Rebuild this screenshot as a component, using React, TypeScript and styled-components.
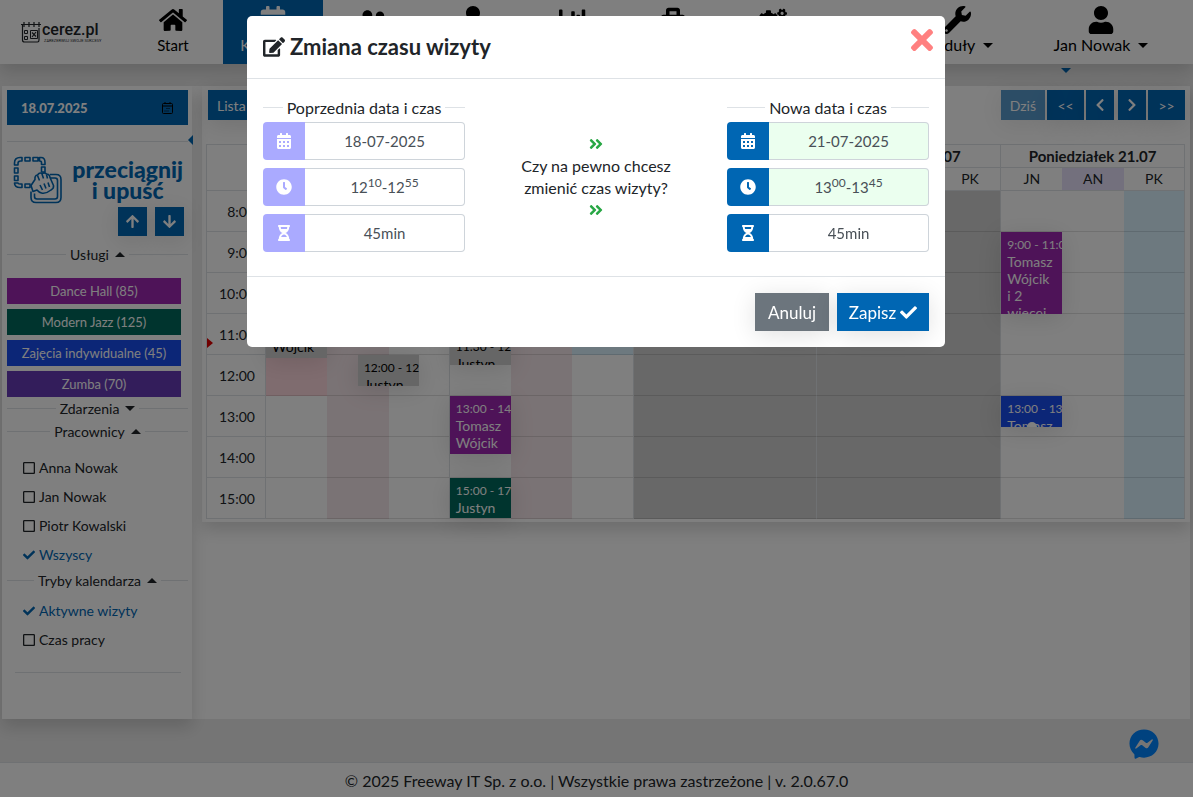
import React, { useState } from "react";
import styled, { createGlobalStyle, css } from "styled-components";
import {
  FaHome, FaCalendarAlt, FaUserFriends, FaUser, FaChartBar, FaToolbox, FaCogs, FaWrench,
  FaEdit, FaCheck, FaTimes, FaClock, FaHourglassHalf, FaAngleDoubleRight, FaArrowUp, FaArrowDown,
  FaChevronLeft, FaChevronRight, FaFacebookMessenger, FaRegSquare,
} from "react-icons/fa";

const blue = "#0066b3";
const line = "#dee2e6";
const shadow = "0 8px 16px rgba(0, 0, 0, 0.15)";
const softShadow = "0 4px 24px rgba(0, 0, 0, 0.12)";

const GlobalStyle = createGlobalStyle`
  *, *::before, *::after { box-sizing: border-box; }
  body {
    margin: 0;
    background: #ebebeb;
    color: #212529;
    font-family: Lato, "Liberation Sans", sans-serif;
    font-size: 14px;
    line-height: 22px;
  }
  button, input { font-family: inherit; }
  a { color: inherit; text-decoration: none; }
`;

const Page = styled.div`
  display: flex;
  flex-direction: column;
  min-height: 100vh;
`;

/* ---------- top bar ---------- */

const TopBar = styled.header`
  position: relative;
  z-index: 1;
  display: flex;
  height: 64px;
  background: #fff;
  box-shadow: ${shadow};
`;

const Brand = styled.a`
  display: flex;
  align-items: center;
  gap: 1px;
  width: 123px;
  padding-left: 21px;
`;

const BrandText = styled.span`
  display: flex;
  flex-direction: column;
  font-family: Roboto, sans-serif;
`;

const BrandName = styled.span`
  font-size: 16px;
  font-weight: 500;
  line-height: 18px;
`;

const BrandClaim = styled.span`
  padding-left: 2px;
  font-size: 4px;
  line-height: 4px;
  white-space: nowrap;
`;

const Nav = styled.nav`
  display: flex;
  flex: 1;
`;

const NavItem = styled.a<{ $active?: boolean }>`
  display: flex;
  flex-direction: column;
  align-items: center;
  width: 100px;
  padding-top: 6px;
  color: ${(p) => (p.$active ? "#fff" : "#000")};
  background: ${(p) => (p.$active ? blue : "transparent")};
  font-size: 15px;
  white-space: nowrap;

  & > svg { height: 28px; width: auto; }
`;

const NavLabel = styled.span`
  display: flex;
  align-items: center;
  gap: 8px;
`;

const NavGroup = styled.div`
  display: flex;
  gap: 44px;
  margin-left: auto;
  padding-right: 42px;

  ${NavLabel} { font-size: 16px; }
`;

const Caret = styled.span<{ $up?: boolean; $color?: string }>`
  display: inline-block;
  border: 5px solid transparent;
  ${(p) =>
    p.$up
      ? css`border-top: 0; border-bottom-color: ${p.$color ?? "currentColor"};`
      : css`border-bottom: 0; border-top-color: ${p.$color ?? "currentColor"};`}
`;

const Strip = styled.div`
  display: flex;
  justify-content: flex-end;
  align-items: flex-start;
  height: 22px;
  padding: 4px 122px 0 0;
`;

/* ---------- content ---------- */

const Content = styled.main`
  display: flex;
  flex: 1;
  align-items: stretch;
  gap: 10px;
  margin: 0 3px 43px 2px;
  background: #fff;
`;

const Sidebar = styled.aside`
  position: relative;
  flex: 0 0 190px;
  min-width: 0;
  padding: 4px 4px 44px 5px;
  background: #fff;
  box-shadow: ${shadow};
`;

const DateField = styled.label`
  display: flex;
  align-items: center;
  height: 35px;
  padding: 0 15px 0 14px;
  background: ${blue};
  color: #000;

  input {
    flex: 1;
    width: 0;
    min-width: 0;
    padding: 0;
    border: 0;
    background: transparent;
    color: #fff;
    font-size: 13px;
    font-weight: 900;
  }
`;

const CollapseMark = styled.span`
  position: absolute;
  right: -1px;
  top: 49px;
  border: 5px solid transparent;
  border-left: 0;
  border-right-color: ${blue};
`;

const Rule = styled.hr<{ $inset?: boolean }>`
  height: 1px;
  margin: ${(p) => (p.$inset ? "18px 7px 0 8px" : "16px 0 0")};
  border: 0;
  background: ${line};
`;

const DragHint = styled.div`
  display: flex;
  align-items: center;
  justify-content: space-between;
  height: 48px;
  margin: 14px 5px 0 6px;
  color: ${blue};
`;

const DragText = styled.p`
  margin: 0;
  font-size: 23px;
  font-weight: 900;
  line-height: 21px;
  text-align: center;
`;

const Arrows = styled.div`
  display: flex;
  justify-content: flex-end;
  gap: 8px;
  margin: 3px 4px 7px 0;
`;

const SquareButton = styled.button`
  display: flex;
  align-items: center;
  justify-content: center;
  width: 29px;
  height: 29px;
  padding: 0;
  border: 0;
  background: ${blue};
  color: #fff;
  font-size: 15px;
  box-shadow: ${softShadow};
`;

const Legend = styled.div<{ $tall?: boolean }>`
  display: flex;
  align-items: center;
  gap: 4px;
  height: ${(p) => (p.$tall ? 25 : 23)}px;
  font-size: ${(p) => (p.$tall ? 16 : 14)}px;
  color: #212529;
  white-space: nowrap;

  &::before, &::after {
    content: "";
    flex: 1;
    height: 1px;
    background: ${line};
  }
`;

const LegendToggle = styled.button`
  display: flex;
  align-items: center;
  gap: 6px;
  padding: 0;
  border: 0;
  background: none;
  color: inherit;
  font-size: 14px;
`;

const Services = styled.div`
  display: flex;
  flex-direction: column;
  gap: 5px;
  margin: 12px 7px 0 0;
`;

const Service = styled.button<{ $color: string }>`
  height: 26px;
  padding: 0;
  border: 0;
  background: ${(p) => p.$color};
  color: #fff;
  font-size: 13px;
`;

const Options = styled.div<{ $first?: boolean }>`
  padding: ${(p) => (p.$first ? "10px 0 0 16px" : "4px 0 0 16px")};
`;

const Option = styled.label<{ $checked: boolean }>`
  position: relative;
  display: flex;
  align-items: center;
  gap: 4px;
  height: 29px;
  color: ${(p) => (p.$checked ? blue : "#212529")};

  input {
    position: absolute;
    left: 0;
    width: 12px;
    height: 12px;
    margin: 0;
    opacity: 0;
  }
  svg { width: 12px; height: 14px; }
`;

/* ---------- calendar ---------- */

const Panel = styled.section`
  flex: 1;
  min-width: 0;
  align-self: flex-start;
  padding: 4px 5px 3px 4px;
  background: #fff;
  box-shadow: ${shadow};
`;

const Toolbar = styled.div`
  display: flex;
  justify-content: space-between;
  height: 30px;
  margin: 0 0 24px 2px;
`;

const ToolGroup = styled.div`
  display: flex;
  gap: 2px;
`;

const ToolButton = styled.button<{ $muted?: boolean; $icon?: boolean }>`
  display: flex;
  align-items: center;
  justify-content: center;
  min-width: ${(p) => (p.$icon ? 28 : 37)}px;
  padding: 0 ${(p) => (p.$icon ? 4 : 9)}px;
  border: 0;
  background: ${blue};
  color: #fff;
  font-size: 14px;
  opacity: ${(p) => (p.$muted ? 0.65 : 1)};
  box-shadow: ${softShadow};

  & + &:nth-child(4) { margin-left: 2px; }
`;

const Grid = styled.table`
  width: 100%;
  table-layout: fixed;
  border-collapse: separate;
  border-spacing: 0;
  border: 1px solid ${line};
  border-width: 1px 0 0 1px;
`;

const TimeCol = styled.col`
  width: 59px;
`;

const HeadCell = styled.th<{ $end?: boolean; $bg?: string; $day?: boolean }>`
  height: 23px;
  padding: 0;
  border-bottom: 1px solid ${line};
  border-right: ${(p) => (p.$end ? `1px solid ${line}` : 0)};
  background: ${(p) => p.$bg ?? "transparent"};
  font-weight: ${(p) => (p.$day ? 700 : 400)};
  font-size: ${(p) => (p.$day ? 15 : 14)}px;
  line-height: 20px;
`;

const HourCell = styled.th`
  position: relative;
  height: 41px;
  padding: 2px 10px 0 0;
  border-bottom: 1px solid ${line};
  border-right: 1px solid ${line};
  font-size: 14px;
  font-weight: 400;
  text-align: right;
`;

const NowMark = styled.span`
  position: absolute;
  left: 0;
  bottom: 6px;
  border: 5px solid transparent;
  border-right: 0;
  border-left: 6px solid #e00000;
`;

const Slot = styled.td<{ $end?: boolean; $bg: string }>`
  position: relative;
  height: 41px;
  padding: 0;
  border-bottom: 1px solid rgba(0, 0, 0, 0.12);
  border-right: ${(p) => (p.$end ? `1px solid ${line}` : 0)};
  background: ${(p) => p.$bg};
`;

const Visit = styled.div<{ $color: string; $past?: boolean }>`
  position: absolute;
  z-index: 1;
  width: 100%;
  padding: 4px 0 0 6px;
  overflow: hidden;
  background: ${(p) => p.$color};
  color: ${(p) => (p.$past ? "#000" : "#fff")};
  font-size: 14px;
  line-height: 17px;
  box-shadow: ${softShadow};
`;

const VisitTime = styled.div`
  font-size: 12px;
  white-space: nowrap;
`;

const ResizeDot = styled.span`
  position: absolute;
  left: 50%;
  bottom: -5px;
  width: 10px;
  height: 10px;
  margin-left: -5px;
  border-radius: 50%;
  background: #fff;
`;

/* ---------- footer ---------- */

const Footer = styled.footer`
  height: 35px;
  padding-top: 7px;
  border-top: 1px solid ${line};
  background: #fff;
  text-align: center;
  font-size: 16px;
`;

const ChatLink = styled.a`
  position: fixed;
  right: 34px;
  bottom: 38px;
  display: flex;
  color: #0084ff;
  font-size: 30px;
`;

/* ---------- dialog ---------- */

const Backdrop = styled.div`
  position: fixed;
  inset: 0;
  z-index: 10;
  padding: 16px 17px 16px 16px;
  background: rgba(0, 0, 0, 0.5);
`;

const Dialog = styled.div`
  max-width: 698px;
  margin: 0 auto;
  border-radius: 5px;
  background: #fff;
`;

const DialogHeader = styled.div`
  display: flex;
  justify-content: space-between;
  padding: 16px;
  border-bottom: 1px solid ${line};
`;

const DialogTitle = styled.h2`
  display: flex;
  align-items: center;
  gap: 5px;
  margin: 0;
  font-size: 22px;
  font-weight: 700;
  line-height: 30px;
`;

const CloseButton = styled.button`
  display: flex;
  height: 22px;
  margin: -8px -9px 0 0;
  padding: 0;
  border: 0;
  background: none;
  color: #ff8080;
  font-size: 32px;
`;

const DialogBody = styled.div`
  display: flex;
  justify-content: space-between;
  padding: 16px 16px 24px;
`;

const Term = styled.div`
  display: flex;
  flex-direction: column;
  gap: 8px;
  width: 202px;

  ${Legend} { margin-bottom: -6px; }
`;

const Question = styled.p`
  width: 170px;
  margin: 38px 0 0;
  text-align: center;
  font-size: 16px;

  svg { display: block; margin: 0 auto; height: 22px; color: #28a745; font-size: 14px; }
`;

const InputGroup = styled.div`
  display: flex;
  height: 38px;
`;

const InputIcon = styled.span<{ $old?: boolean }>`
  display: flex;
  align-items: center;
  justify-content: center;
  width: 42px;
  border-radius: 4px 0 0 4px;
  background: ${(p) => (p.$old ? "#aaaaff" : blue)};
  color: #fff;
  font-size: 16px;
`;

const Value = styled.output<{ $changed?: boolean }>`
  flex: 1;
  border: 1px solid #ced4da;
  border-left: 0;
  border-radius: 0 4px 4px 0;
  background: ${(p) => (p.$changed ? "#ebffef" : "#fff")};
  color: #495057;
  font-size: 15px;
  line-height: 36px;
  text-align: center;

  sup { font-size: 12px; line-height: 0; }
`;

const DialogFooter = styled.div`
  display: flex;
  justify-content: flex-end;
  gap: 8px;
  padding: 16px;
  border-top: 1px solid ${line};
`;

const ActionButton = styled.button<{ $primary?: boolean }>`
  display: flex;
  align-items: center;
  justify-content: center;
  gap: 4px;
  height: 38px;
  min-width: ${(p) => (p.$primary ? 92 : 74)}px;
  padding: 0 11px;
  border: 0;
  background: ${(p) => (p.$primary ? blue : "#6c757d")};
  color: #fff;
  font-size: 17px;
  box-shadow: ${softShadow};
`;

/* ---------- drawings ---------- */

const LogoMark = () => (
  <svg width="20" height="22" viewBox="0 0 20 22" fill="none" stroke="#212529">
    <path d="M0 3.5h20M1.5 3.500v15.500q0 2 2 2h13q1.500 0 1.500-2v-12" strokeWidth="1.200" />
    <path d="M3 1v5M8 1v5M13 1v5M18 1v5" strokeWidth="1.200" />
    <path d="M3.500 9.500h3v3h-3zM3.500 15.500h3v3h-3zM9.500 9.500h7v8h-7z" />
    <path d="M11 11.500l4 4M15 11l-4 5" strokeWidth="1.200" />
  </svg>
);

const DragMark = () => (
  <svg width="50" height="48" viewBox="0 0 50 48" fill="none" stroke={blue} strokeWidth="1.600" strokeLinejoin="round">
    <path d="M9 1.500h-2q-5.500 0-5.500 5.500v2h3.500v-1.500q0-2.500 2.500-2.500h1.500zM12 1.500h5v3.500h-5zM20 1.500h5v3.500h-5zM28 1.500q4 0 4 5v2h-3.500v-2q0-1.500-2-1.500v-3.500zM28.500 11h3.500v5h-3.500zM1.500 12h3.500v5h-3.500zM1.500 20h3.500v4.500h-3.500zM1.500 27h3.500q0 1 2 1h2v3.500h-2q-5.500 0-5.500-4.500zM12 28h5v3.500h-5z" />
    <path d="M37 18.500h6q5 0 5 5v18q0 5-5 5h-20q-5 0-5-5v-6M38 22h4q2.500 0 2.500 2.500v16q0 2.500-2.500 2.500h-18q-2.500 0-2.500-2.500v-3" />
    <path d="M18 29.500l4-6q-.5-4 2.500-4.500q2-3 4.500-1.500q2.500-1.500 4.500.5q3 0 3.500 3.500l3.500 8q.5 3-2.500 4.500q-5 4-9.500 3q-2.500-.5-4.500-3l-4 1.500z" fill="#fff" />
    <path d="M24.500 19.500l2 5M29 18l1.500 4.500M33.500 18.500l1 4M27 29l2.500 5M31 27.500l2 5M35 26.500l1.500 4.500" />
  </svg>
);

const SmallCalendar = () => (
  <svg width="11" height="12" viewBox="0 0 11 12" fill="none" stroke="#000">
    <rect x=".5" y="1.500" width="10" height="10" rx="1" />
    <path d="M.5 4h10M3 0v2M8 0v2" />
    <path d="M4.500 6.500h4M2.500 9h4.500" strokeDasharray="1 1" />
  </svg>
);

/* ---------- data ---------- */

const nav = [
  { label: "Start", icon: FaHome },
  { label: "Kalendarz", icon: FaCalendarAlt, active: true },
  { label: "Klienci", icon: FaUserFriends },
  { label: "Pracownicy", icon: FaUser },
  { label: "Raporty", icon: FaChartBar },
  { label: "Usługi", icon: FaToolbox },
  { label: "Ustawienia", icon: FaCogs },
];

const services = [
  { name: "Dance Hall (85)", color: "#9c27b0" },
  { name: "Modern Jazz (125)", color: "#00695c" },
  { name: "Zajęcia indywidualne (45)", color: "#184cef" },
  { name: "Zumba (70)", color: "#673ab7" },
];

const days = ["Czwartek 17.07", "Piątek 18.07", "Sobota 19.07", "Niedziela 20.07", "Poniedziałek 21.07"];
const staff = ["JN", "AN", "PK"];
const hours = [8, 9, 10, 11, 12, 13, 14, 15];

const slotColor = (day: number, person: number, hour: number) => {
  if (day === 2 || day === 3) return "#d0d0d0";
  if (day === 4) return person === 2 ? "#daf3ff" : "#fff";
  if (person === 1) return "#f5e6ea";
  if (day === 0 && person === 0 && hour < 13) return "#ffd9df";
  if (day === 1 && person === 2 && hour < 12) return "#daf3ff";
  return "#fff";
};

type VisitData = {
  day: number; person: number; hour: number; top: number; height: number;
  time: string; lines: string[]; color: string; past?: boolean; shifted?: boolean; dot?: boolean;
};

const visits: VisitData[] = [
  { day: 0, person: 0, hour: 10, top: 27, height: 58, time: "10:40 - 12:05", lines: ["Tomasz", "Wójcik"], color: "#ccc", past: true },
  { day: 0, person: 1, hour: 12, top: 0, height: 31, time: "12:00 - 12:45", lines: ["Justyn"], color: "#ccc", past: true, shifted: true },
  { day: 1, person: 0, hour: 11, top: 20, height: 31, time: "11:30 - 12:15", lines: ["Justyn"], color: "#ccc", past: true },
  { day: 1, person: 0, hour: 13, top: 0, height: 58, time: "13:00 - 14:25", lines: ["Tomasz", "Wójcik"], color: "#9c27b0" },
  { day: 1, person: 0, hour: 15, top: 0, height: 40, time: "15:00 - 17:05", lines: ["Justyn"], color: "#00695c" },
  { day: 4, person: 0, hour: 9, top: 0, height: 82, time: "9:00 - 11:00", lines: ["Tomasz", "Wójcik", "i 2", "więcej"], color: "#9c27b0" },
  { day: 4, person: 0, hour: 13, top: 0, height: 31, time: "13:00 - 13:45", lines: ["Tomasz"], color: "#184cef", dot: true },
];

/* ---------- parts ---------- */

const CheckOption = ({ label, initial = false }: { label: string; initial?: boolean }) => {
  const [checked, setChecked] = useState(initial);
  return (
    <Option $checked={checked}>
      <input type="checkbox" checked={checked} onChange={(e) => setChecked(e.target.checked)} />
      {checked ? <FaCheck /> : <FaRegSquare />}
      {label}
    </Option>
  );
};

const SectionLegend = ({ label, open }: { label: string; open?: boolean }) => (
  <Legend>
    <LegendToggle aria-expanded={!!open}>{label}<Caret $up={open} /></LegendToggle>
  </Legend>
);

const TermBox = ({ title, date, from, to, old }: {
  title: string; date: string; from: [string, string]; to: [string, string]; old?: boolean;
}) => (
  <Term>
    <Legend $tall>{title}</Legend>
    <InputGroup>
      <InputIcon $old={old}><FaCalendarAlt /></InputIcon>
      <Value $changed={!old}>{date}</Value>
    </InputGroup>
    <InputGroup>
      <InputIcon $old={old}><FaClock /></InputIcon>
      <Value $changed={!old}>{from[0]}<sup>{from[1]}</sup>-{to[0]}<sup>{to[1]}</sup></Value>
    </InputGroup>
    <InputGroup>
      <InputIcon $old={old}><FaHourglassHalf /></InputIcon>
      <Value>45min</Value>
    </InputGroup>
  </Term>
);

const VisitBox = ({ visit }: { visit: VisitData }) => (
  <Visit
    $color={visit.color}
    $past={visit.past}
    style={{ top: visit.top, height: visit.height, left: visit.shifted ? "50%" : 0 }}
  >
    <VisitTime>{visit.time}</VisitTime>
    {visit.lines.map((l) => <div key={l}>{l}</div>)}
    {visit.dot && <ResizeDot />}
  </Visit>
);

export default function App() {
  return (
    <>
      <GlobalStyle />
      <Page>
        <TopBar>
          <Brand href="#">
            <LogoMark />
            <BrandText>
              <BrandName>cerez.pl</BrandName>
              <BrandClaim>ZAREZERWUJ SWOJE SUKCESY</BrandClaim>
            </BrandText>
          </Brand>
          <Nav>
            {nav.map(({ label, icon: Icon, active }) => (
              <NavItem key={label} href="#" $active={active}><Icon /><NavLabel>{label}</NavLabel></NavItem>
            ))}
            <NavGroup>
              <NavItem href="#"><FaWrench /><NavLabel>Moduły<Caret /></NavLabel></NavItem>
              <NavItem href="#"><FaUser /><NavLabel>Jan Nowak<Caret /></NavLabel></NavItem>
            </NavGroup>
          </Nav>
        </TopBar>
        <Strip><Caret $color={blue} /></Strip>

        <Content>
          <Sidebar>
            <DateField>
              <input type="text" aria-label="Data" defaultValue="18.07.2025" />
              <SmallCalendar />
            </DateField>
            <CollapseMark />
            <Rule />
            <DragHint>
              <DragMark />
              <DragText>przeciągnij<br />i upuść</DragText>
            </DragHint>
            <Arrows>
              <SquareButton aria-label="W górę"><FaArrowUp /></SquareButton>
              <SquareButton aria-label="W dół"><FaArrowDown /></SquareButton>
            </Arrows>
            <SectionLegend label="Usługi" open />
            <Services>
              {services.map((s) => <Service key={s.name} $color={s.color}>{s.name}</Service>)}
            </Services>
            <SectionLegend label="Zdarzenia" />
            <SectionLegend label="Pracownicy" open />
            <Options $first>
              <CheckOption label="Anna Nowak" />
              <CheckOption label="Jan Nowak" />
              <CheckOption label="Piotr Kowalski" />
              <CheckOption label="Wszyscy" initial />
            </Options>
            <SectionLegend label="Tryby kalendarza" open />
            <Options>
              <CheckOption label="Aktywne wizyty" initial />
              <CheckOption label="Czas pracy" />
            </Options>
            <Rule $inset />
          </Sidebar>

          <Panel>
            <Toolbar>
              <ToolButton>Lista wizyt</ToolButton>
              <ToolGroup>
                <ToolButton $muted>Dziś</ToolButton>
                <ToolButton>&lt;&lt;</ToolButton>
                <ToolButton $icon aria-label="Poprzedni dzień"><FaChevronLeft /></ToolButton>
                <ToolButton $icon aria-label="Następny dzień"><FaChevronRight /></ToolButton>
                <ToolButton>&gt;&gt;</ToolButton>
              </ToolGroup>
            </Toolbar>
            <Grid>
              <colgroup>
                <TimeCol />
                {days.map((d) => staff.map((s) => <col key={d + s} />))}
              </colgroup>
              <thead>
                <tr>
                  <HeadCell rowSpan={2} $end />
                  {days.map((d) => <HeadCell key={d} colSpan={3} $end $day>{d}</HeadCell>)}
                </tr>
                <tr>
                  {days.map((d, day) => staff.map((s, i) => (
                    <HeadCell key={d + s} $end={i === 2} $bg={day === 4 && i === 1 ? "#e6e0fa" : undefined}>{s}</HeadCell>
                  )))}
                </tr>
              </thead>
              <tbody>
                {hours.map((hour) => (
                  <tr key={hour}>
                    <HourCell scope="row">
                      {hour}:00
                      {hour === 11 && <NowMark />}
                    </HourCell>
                    {days.map((d, day) => staff.map((s, person) => (
                      <Slot key={d + s} $end={person === 2} $bg={slotColor(day, person, hour)}>
                        {visits
                          .filter((v) => v.day === day && v.person === person && v.hour === hour)
                          .map((v) => <VisitBox key={v.time} visit={v} />)}
                      </Slot>
                    )))}
                  </tr>
                ))}
              </tbody>
            </Grid>
          </Panel>
        </Content>

        <Footer>© 2025 Freeway IT Sp. z o.o. | Wszystkie prawa zastrzeżone | v. 2.0.67.0</Footer>
        <ChatLink href="#" aria-label="Messenger"><FaFacebookMessenger /></ChatLink>
      </Page>

      <Backdrop>
        <Dialog role="dialog" aria-modal="true" aria-labelledby="dialog-title">
          <DialogHeader>
            <DialogTitle id="dialog-title"><FaEdit />Zmiana czasu wizyty</DialogTitle>
            <CloseButton aria-label="Zamknij"><FaTimes /></CloseButton>
          </DialogHeader>
          <DialogBody>
            <TermBox title="Poprzednia data i czas" date="18-07-2025" from={["12", "10"]} to={["12", "55"]} old />
            <Question>
              <FaAngleDoubleRight />
              Czy na pewno chcesz zmienić czas wizyty?
              <FaAngleDoubleRight />
            </Question>
            <TermBox title="Nowa data i czas" date="21-07-2025" from={["13", "00"]} to={["13", "45"]} />
          </DialogBody>
          <DialogFooter>
            <ActionButton>Anuluj</ActionButton>
            <ActionButton $primary>Zapisz<FaCheck /></ActionButton>
          </DialogFooter>
        </Dialog>
      </Backdrop>
    </>
  );
}
